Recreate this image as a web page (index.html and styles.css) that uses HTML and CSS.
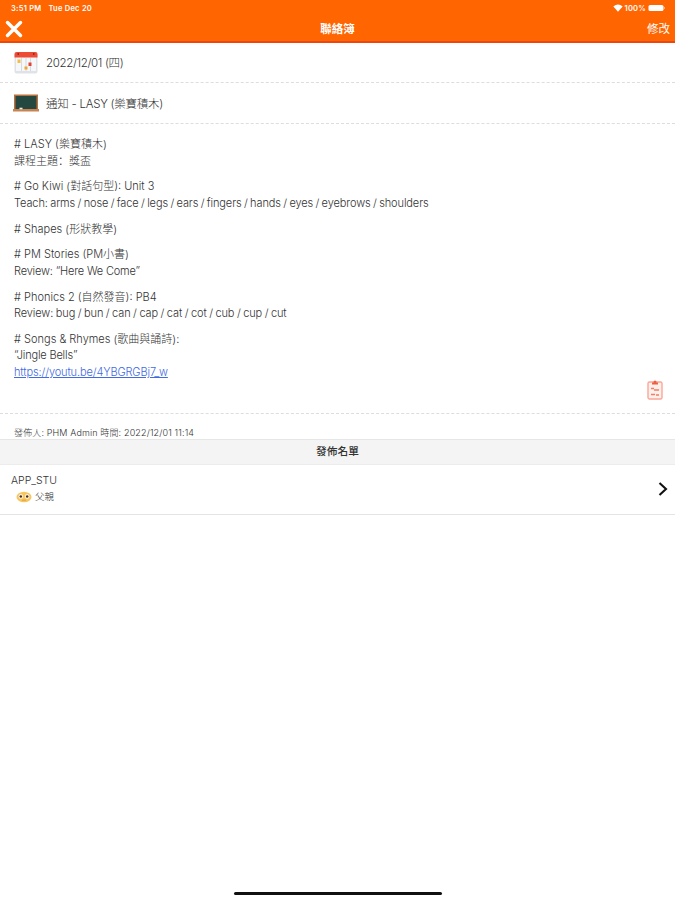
FILE: index.html
```html
<!DOCTYPE html>
<html lang="zh-Hant">
  <head>
    <meta charset="UTF-8" />
    <meta name="viewport" content="width=device-width, initial-scale=1.0" />
    <title>聯絡簿</title>
    <link rel="stylesheet" href="styles.css">
  </head>
  <body>
    <header>
      <div class="status">
        <span class="time">3:51 PM</span>
        <span class="date">Tue Dec 20</span>
        <svg class="wifi" width="10" height="8" viewBox="0 0 10 8">
          <path d="M5 7.8L0.3 2.6Q5 -1.6 9.7 2.6Z" fill="#fff" />
        </svg>
        <span class="percent">100%</span>
        <svg class="battery" width="18" height="8" viewBox="0 0 18 8">
          <rect x="0.5" y="1" width="15" height="6" rx="1.6" fill="#fff" />
          <path d="M16.5 3v2" stroke="#ffb07c" stroke-width="1" />
        </svg>
      </div>
      <nav>
        <svg class="close" width="18" height="18" viewBox="0 0 18 18">
          <path d="M2.5 2.5L15.5 15.5M15.5 2.5L2.5 15.5" stroke="#fff" stroke-width="3.5" stroke-linecap="round" />
        </svg>
        <h1>聯絡簿</h1>
        <span class="edit">修改</span>
      </nav>
    </header>
    <main>
      <div class="row">
        <svg width="26" height="24" viewBox="0 0 26 24">
          <rect x="1.5" y="2" width="23" height="20.5" rx="2" fill="#dfe3e8" />
          <rect x="3" y="6" width="20" height="14" fill="#f6f7f9" />
          <path d="M1.5 6.5V3Q1.5 1 3.5 1H22.5Q24.5 1 24.5 3V6.5Z" fill="#ee4b36" />
          <path d="M4.5 3h1.5M20 3h1.5" stroke="#8c2c2c" stroke-width="2" />
          <path d="M8.5 7v13M13 7v13M17.5 7v13" stroke="#ced3d9" stroke-width="0.8" />
          <rect x="4.5" y="8.5" width="3" height="3.5" fill="#f5bd45" />
          <rect x="15.5" y="11.5" width="3" height="3.5" fill="#df4434" />
          <rect x="11.5" y="15.5" width="3" height="3" fill="#f0a637" />
        </svg>
        <span class="day">2022/12/01 (四)</span>
      </div>
      <div class="row subject">
        <svg width="26" height="18" viewBox="0 0 26 18">
          <rect x="1" y="0.5" width="24" height="16" fill="#b8703f" />
          <rect x="2.5" y="2" width="21" height="13" fill="#24483f" />
          <path d="M0 15h26v2.5H0z" fill="#c98352" />
          <path d="M6.5 14.5h3" stroke="#e6eef0" stroke-width="1.6" />
        </svg>
        <span class="topic">通知 - LASY (樂寶積木)</span>
      </div>
      <section class="message">
        <p># LASY (樂寶積木)<br>課程主題<span class="colon" lang="zh-Hans">：</span>獎盃</p>
        <p># Go Kiwi (對話句型): Unit 3<br><span class="words">Teach: arms / nose / face / legs / ears / fingers / hands / eyes / eyebrows / shoulders</span></p>
        <p># Shapes (形狀教學)</p>
        <p># PM Stories (PM小書)<br><span class="quote">Review: “Here We Come”</span></p>
        <p># Phonics 2 (自然發音): PB4<br><span class="words short">Review: bug / bun / can / cap / cat / cot / cub / cup / cut</span></p>
        <p># Songs &amp; Rhymes (歌曲與誦詩):<br><span class="quote">“Jingle Bells”</span><br><a href="https://youtu.be/4YBGRGBj7_w">https://youtu.be/4YBGRGBj7_w</a></p>
        <svg class="clipboard" width="16" height="20" viewBox="0 0 16 20">
          <rect x="1" y="2" width="14" height="17" rx="1.5" fill="#fff0ec" stroke="#f9a796" stroke-width="1.4" />
          <path d="M5 2.5h6v2H5z" fill="#ed6143" />
          <circle cx="8" cy="2" r="1.5" fill="#ed6143" />
          <path d="M4 8.5h3M7 10h5M4 14.5h4M9 15h3" stroke="#f07d65" stroke-width="1.4" />
        </svg>
      </section>
      <div class="publisher">發佈人: PHM Admin 時間: 2022/12/01 11:14</div>
      <h2>發佈名單</h2>
      <div class="student">
        <div>
          <div class="name">APP_STU</div>
          <div class="parent">
            <svg width="16" height="12" viewBox="0 0 16 12">
              <ellipse cx="8" cy="6" rx="7.5" ry="5.2" fill="#f7c65d" />
              <circle cx="4.8" cy="5.5" r="2.2" fill="#fff" />
              <circle cx="11.2" cy="5.5" r="2.2" fill="#fff" />
              <circle cx="4.8" cy="5.5" r="1.3" fill="#4b2b20" />
              <circle cx="11.2" cy="5.5" r="1.3" fill="#4b2b20" />
              <path d="M6 9.2h4" stroke="#dc9440" stroke-width="0.8" />
            </svg>
            <span>父親</span>
          </div>
        </div>
        <svg class="arrow" width="10" height="16" viewBox="0 0 10 16">
          <path d="M1.5 2L8 8L1.5 14" fill="none" stroke="#111" stroke-width="2.1" />
        </svg>
      </div>
    </main>
    <footer>
      <div class="home"></div>
    </footer>
  </body>
</html>
```
FILE: styles.css
```css
* {
  margin: 0;
  padding: 0;
  box-sizing: border-box;
}

body {
  font-family: "Inter", "Noto Sans CJK TC", sans-serif;
  font-size: 11px;
  font-weight: 300;
  color: #333;
  background-color: #fff;
  display: flex;
  flex-direction: column;
  height: 100vh;
  overflow: hidden;
}

svg {
  display: block;
  flex-shrink: 0;
}

header {
  height: 43px;
  background-color: #ff6500;
  border-bottom: 2px solid #ee4610;
  color: #fff;
}

.status {
  display: flex;
  align-items: center;
  height: 16px;
  padding: 0 9px 0 11px;
  font-size: 7.5px;
  font-weight: 600;
}

.time {
  letter-spacing: 0.25px;
}

.date {
  margin-left: 7px;
  letter-spacing: 0.25px;
}

.wifi {
  margin-left: auto;
}

.percent {
  margin: 0 2px;
  letter-spacing: 0.2px;
}

nav {
  display: grid;
  grid-template-columns: 1fr auto 1fr;
  align-items: center;
  height: 25px;
  padding: 0 5px;
}

h1 {
  font-size: 11.5px;
  font-weight: 700;
  line-height: 16px;
}

.edit {
  justify-self: end;
  font-size: 11.5px;
  font-weight: 400;
  line-height: 16px;
}

.row {
  display: flex;
  align-items: center;
  gap: 7px;
  height: 40px;
  padding-left: 13px;
  border-bottom: 1px dashed #ddd;
  font-size: 11.5px;
}

.day {
  margin-top: -2px;
  letter-spacing: -0.35px;
}

.subject {
  height: 41px;
}

.topic {
  letter-spacing: -0.25px;
}

.message {
  height: 290px;
  padding: 12px 12px 0 14px;
  border-bottom: 1px dashed #ddd;
  line-height: 16.5px;
}

.message p {
  margin-bottom: 9.3px;
}

.message a {
  color: #4169e1;
  letter-spacing: -0.12px;
}

.colon {
  font-family: "Noto Sans CJK SC", sans-serif;
  line-height: 1;
}

.words {
  letter-spacing: -0.1px;
  word-spacing: -0.6px;
}

.short {
  word-spacing: -0.45px;
}

.quote {
  letter-spacing: -0.17px;
}

.clipboard {
  margin: -10px 0 0 auto;
}

/* нижняя часть строки закрыта заголовком списка */
.publisher {
  height: 25px;
  padding: 12px 14px 0;
  font-size: 9px;
  line-height: 14px;
  letter-spacing: 0.14px;
  overflow: hidden;
}

h2 {
  height: 26px;
  background-color: #f4f4f4;
  border-top: 1px solid #e6e6e6;
  border-bottom: 1px solid #ececec;
  font-size: 10.7px;
  font-weight: 500;
  line-height: 24px;
  text-align: center;
}

.student {
  display: flex;
  align-items: center;
  justify-content: space-between;
  height: 50px;
  padding: 0 7px 2px 11px;
  border-bottom: 1px solid #e4e4e4;
}

.name {
  font-size: 10.5px;
  line-height: 17px;
}

.parent {
  display: flex;
  align-items: center;
  gap: 3px;
  padding-left: 5px;
  font-size: 9.5px;
  line-height: 16px;
}

footer {
  margin-top: auto;
  padding-bottom: 5px;
}

.home {
  width: 208px;
  height: 3px;
  margin: 0 auto;
  border-radius: 2px;
  background-color: #111;
}
```
